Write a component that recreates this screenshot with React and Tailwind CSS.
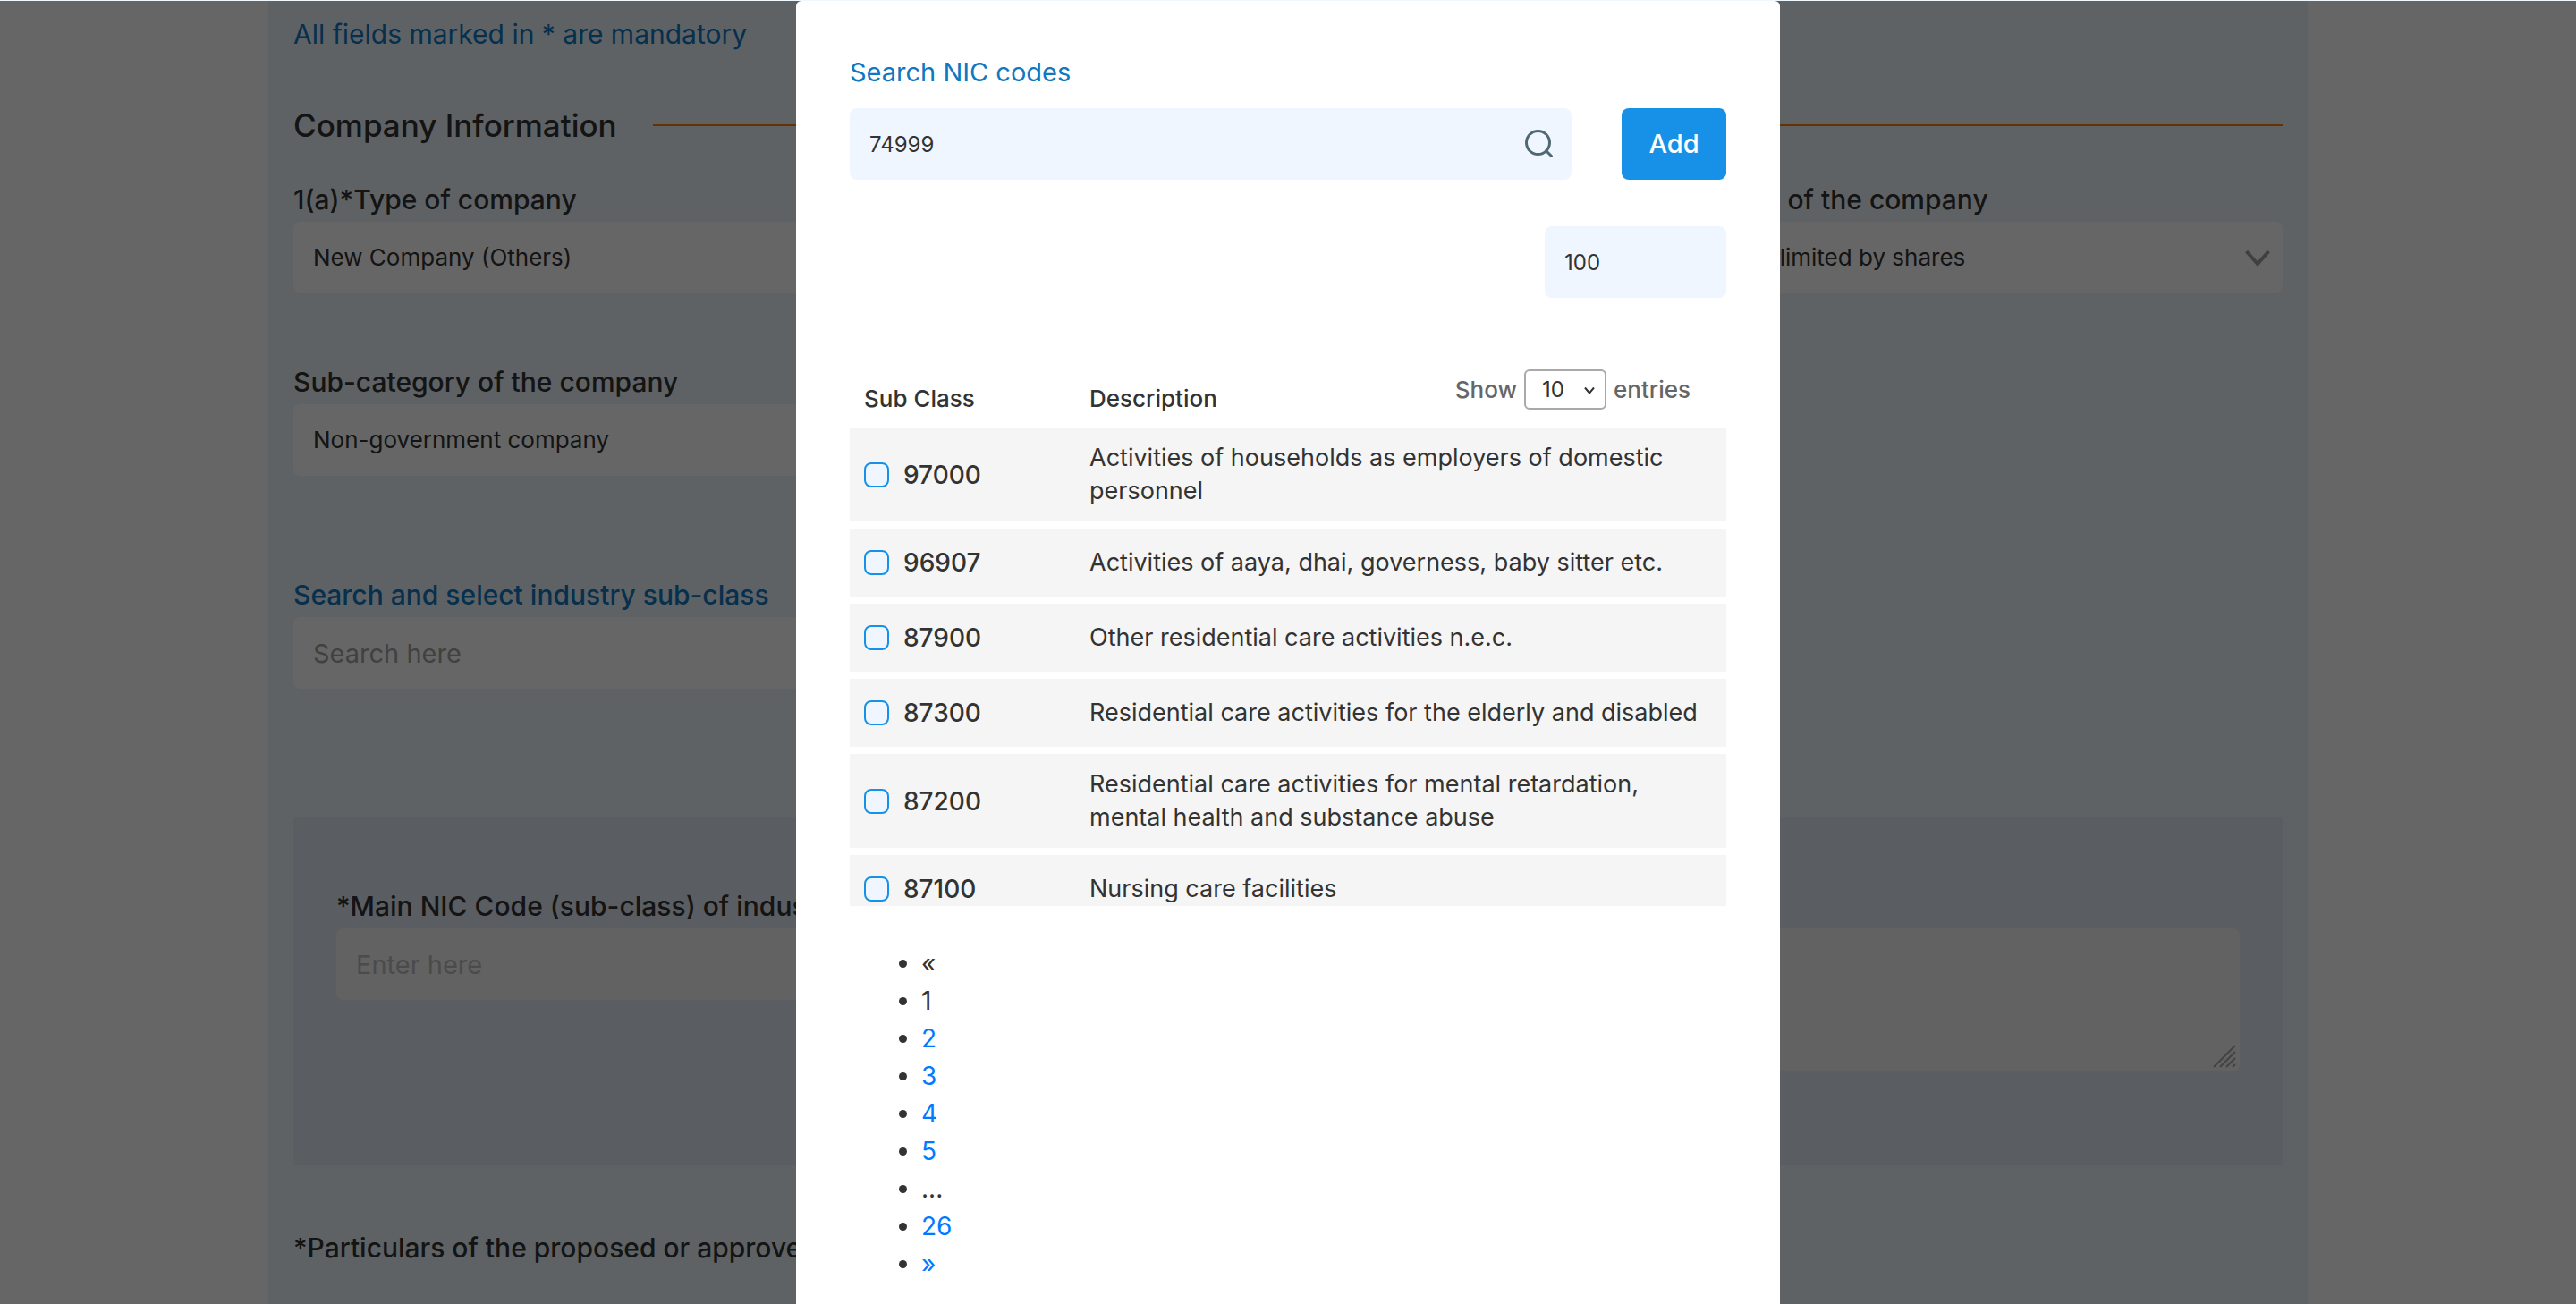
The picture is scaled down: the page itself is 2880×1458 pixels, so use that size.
import React from "react";

const rows = [
  ["97000", "Activities of households as employers of domestic personnel"],
  ["96907", "Activities of aaya, dhai, governess, baby sitter etc."],
  ["87900", "Other residential care activities n.e.c."],
  ["87300", "Residential care activities for the elderly and disabled"],
  ["87200", "Residential care activities for mental retardation, mental health and substance abuse"],
  ["87100", "Nursing care facilities"],
];

const pages = [
  { text: "«" },
  { text: "1" },
  { text: "2", link: true },
  { text: "3", link: true },
  { text: "4", link: true },
  { text: "5", link: true },
  { text: "..." },
  { text: "26", link: true },
  { text: "»", link: true },
];

function SelectField({ id, label, value }) {
  return (
    <div className="flex flex-col gap-1">
      <label htmlFor={id} className="font-medium whitespace-nowrap">{label}</label>
      <div className="relative">
        <select id={id} className="h-20 w-full appearance-none rounded-lg bg-white px-[22px] text-[26px]">
          <option>{value}</option>
        </select>
        <svg className="pointer-events-none absolute top-[31px] right-[14px] h-[20px] w-[28px]" viewBox="0 0 28 20" fill="none" stroke="#a0a0a0" strokeWidth="4">
          <path d="M1.5 2 14 16 26.5 2" />
        </svg>
      </div>
    </div>
  );
}

function CompanyForm() {
  return (
    <main className="mx-auto min-h-screen max-w-[2280px] bg-[#ebf5fc] px-7 pt-4 text-[30px]">
      <p className="text-[#0f78c0]">All fields marked in * are mandatory</p>
      <div className="mt-[57px] flex items-center gap-10">
        <h2 className="text-[35px] leading-[48px] font-medium">Company Information</h2>
        <div className="h-0.5 flex-1 bg-[#ff8000]" />
      </div>
      <div className="mt-[38px] grid grid-cols-3 gap-x-12">
        <SelectField id="company-type" label="1(a)*Type of company" value="New Company (Others)" />
        <div className="col-start-3">
          <SelectField id="company-category" label="*Category of the company" value="Company limited by shares" />
        </div>
        <div className="mt-[78px]">
          <SelectField id="company-subcategory" label="Sub-category of the company" value="Non-government company" />
        </div>
        <div className="col-start-1 mt-28 flex flex-col gap-1">
          <label htmlFor="industry-search" className="font-medium text-[#0f78c0]">Search and select industry sub-class</label>
          <input id="industry-search" placeholder="Search here" className="h-20 rounded-lg bg-white px-[22px] text-[29px] placeholder:text-[#a2a2a2]" />
        </div>
      </div>
      <section className="mt-36 grid grid-cols-3 gap-x-12 bg-[#e2e8f3] px-12 pt-[78px] pb-[105px]">
        <div className="flex flex-col gap-1">
          <label htmlFor="main-nic" className="font-medium whitespace-nowrap">*Main NIC Code (sub-class) of industry</label>
          <input id="main-nic" placeholder="Enter here" className="h-20 rounded-lg bg-[#f5f5f5] px-[22px] text-[29px] placeholder:text-[#bbbbbb]" />
        </div>
        <div className="relative col-span-2 mt-[46px] h-40">
          <textarea aria-label="Description" className="h-full w-full resize-none rounded-lg bg-[#f5f5f5] p-[22px]" />
          <svg className="pointer-events-none absolute right-1 bottom-1 h-[26px] w-[26px]" viewBox="0 0 26 26" fill="none" stroke="#a6a6a6" strokeWidth="2">
            <path d="M1 25 25 1M8 25 25 8M15 25l10-10M22 25l3-3" />
          </svg>
        </div>
      </section>
      <p className="mt-[71px] font-medium">*Particulars of the proposed or approved name</p>
    </main>
  );
}

function NicDialog() {
  return (
    <div role="dialog" aria-label="Search NIC codes" className="min-h-full w-full max-w-[1100px] rounded-t-md bg-white px-[60px] pt-[59px]">
      <label htmlFor="nic-search" className="block text-[29px] text-[#0f78c0]">Search NIC codes</label>
      <div className="mt-[19px] flex gap-14">
        <div className="relative flex-1">
          <input id="nic-search" defaultValue="74999" className="h-20 w-full rounded-lg bg-[#eff6ff] px-[22px] text-2xl" />
          <svg className="pointer-events-none absolute top-[24px] right-[20px] h-8 w-8" viewBox="0 0 32 32" fill="none" stroke="#4f6874" strokeWidth="3" strokeLinecap="round">
            <circle cx="14.5" cy="14.5" r="13" />
            <path d="m23.5 23.5 6 6" />
          </svg>
        </div>
        <button type="button" className="h-20 w-[117px] rounded-lg bg-[#1791e8] text-[29px] font-medium text-white">Add</button>
      </div>
      <div className="mt-[52px] flex justify-end">
        <input aria-label="Limit" defaultValue="100" className="h-20 w-[203px] rounded-lg bg-[#eff6ff] px-[22px] text-2xl" />
      </div>
      <div className="mt-[72px] h-[608px] overflow-y-auto [scrollbar-width:none]">
        <table className="w-full border-separate border-spacing-x-0 border-spacing-y-2">
          <thead>
            <tr className="h-[57px] text-left text-[26px] leading-9">
              <th scope="col" className="w-[268px] pb-1.5 pl-4 align-bottom font-medium">Sub Class</th>
              <th scope="col" className="p-0 font-medium">
                <div className="flex h-[57px] items-start justify-between pr-10">
                  <span className="self-end pb-1.5">Description</span>
                  <label className="flex items-center gap-2 text-[#666666]">
                    Show
                    <span className="relative">
                      <select className="block h-[45px] w-[92px] appearance-none rounded-md border-2 border-[#a9a9a9] bg-white pl-[18px] text-2xl font-normal text-[#333333]">
                        <option>10</option>
                      </select>
                      <svg className="pointer-events-none absolute top-[19px] right-[13px] h-2.5 w-3" viewBox="0 0 12 10" fill="none" stroke="#333333" strokeWidth="2">
                        <path d="M1 1.5 6 7.5l5-6" />
                      </svg>
                    </span>
                    entries
                  </label>
                </div>
              </th>
            </tr>
          </thead>
          <tbody>
            {rows.map(([code, text]) => (
              <tr key={code} className="h-[76px] bg-[#f5f5f5]">
                <td className="pl-4">
                  <label className="flex items-center gap-4 font-medium">
                    <input type="checkbox" className="h-7 w-7 appearance-none rounded-lg border-2 border-[#1791e8] bg-[#eff6ff]" />
                    {code}
                  </label>
                </td>
                <td className="pt-[15px] pr-4 pb-4 text-[27px] leading-[37px]">{text}</td>
              </tr>
            ))}
          </tbody>
        </table>
      </div>
      <ul className="mt-[43px] list-disc pl-[80px]">
        {pages.map(({ text, link }) => (
          <li key={text}>{link ? <a href="#" className="text-[#007bff]">{text}</a> : text}</li>
        ))}
      </ul>
    </div>
  );
}

export default function App() {
  return (
    <div className="h-screen overflow-hidden border-t border-[#eff8ff] bg-white font-['Inter',sans-serif] text-[28px] leading-[42px] text-[#333333]">
      <CompanyForm />
      <div className="fixed inset-x-0 top-px bottom-0 flex justify-center overflow-y-auto bg-black/60 [scrollbar-width:none]">
        <NicDialog />
      </div>
    </div>
  );
}
